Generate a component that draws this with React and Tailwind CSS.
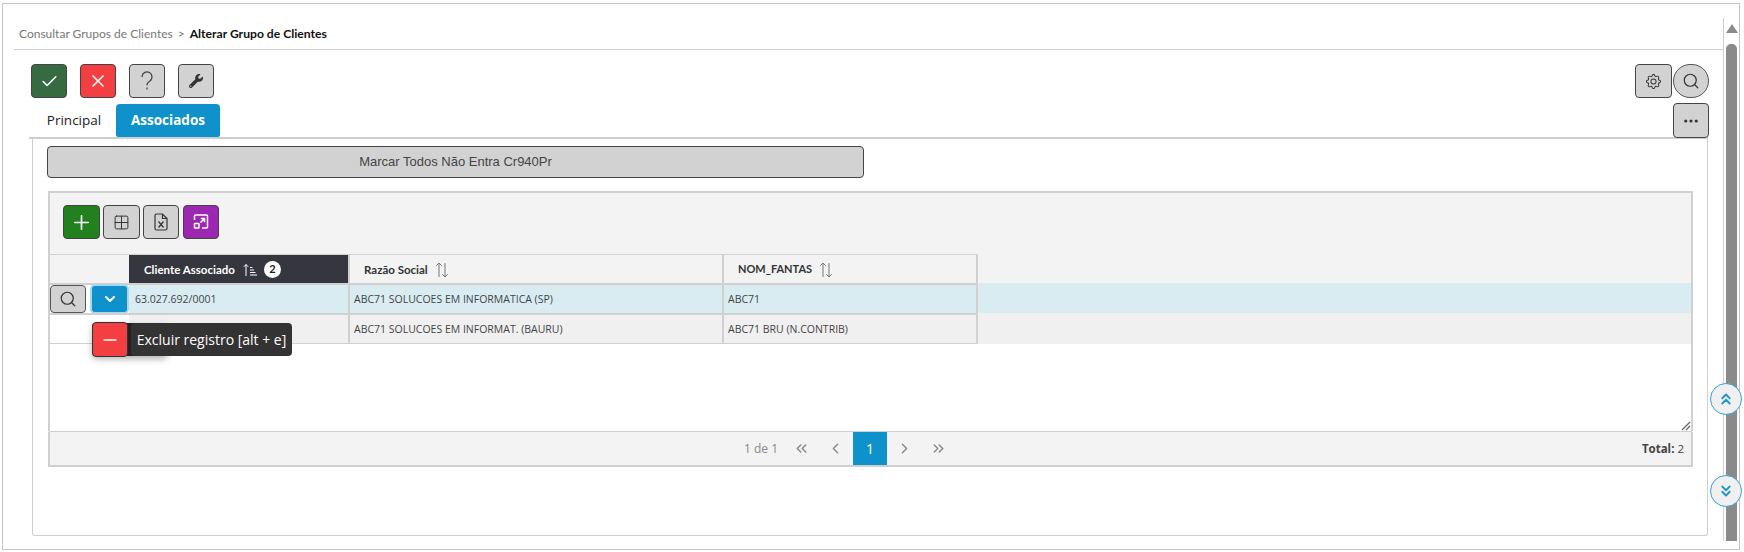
import { Check, X, Minus, Plus, Search, Grid2x2, ChevronDown, ChevronsUp, ChevronsDown, ChevronsLeft, ChevronsRight, ChevronLeft, ChevronRight, Ellipsis } from 'lucide-react';
import { FaWrench } from 'react-icons/fa';
import { BsGear } from 'react-icons/bs';

const latin = 'font-["Lato","Liberation_Sans",sans-serif]';
const segoe = 'font-["Open_Sans","Noto_Sans",sans-serif]';

const ToolButton = ({ className = '', children }) => (
  <button className={`flex h-[34px] items-center justify-center rounded-[4px] border border-[#444] ${className}`}>
    {children}
  </button>
);

const SortIcon = () => (
  <svg width="14" height="16" viewBox="0 0 14 16" fill="none" stroke="#777" strokeWidth="1" className="ml-[7px]">
    <path d="M4 15V1M1.2 3.8L4 1L6.8 3.8" />
    <path d="M10 1V15M7.2 12.2L10 15L12.8 12.2" />
  </svg>
);

const SortedIcon = () => (
  <svg width="15" height="14" viewBox="0 0 15 14" fill="none" stroke="#fff" strokeWidth="1" className="ml-[8px]">
    <path d="M3 13V1.5M0.8 3.8L3 1.5L5.2 3.8" />
    <path d="M7 4.5h2.5M7 7h4M7 9.5h5.5M7 12h7" />
  </svg>
);

const Cell = ({ className = '', children }) => (
  <div className={`flex shrink-0 items-center border-[#d0d0d0] text-[10.5px] text-[#444] ${segoe} ${className}`}>{children}</div>
);

const Label = ({ children }) => <span className="pt-[2px]">{children}</span>;

const rows = [
  { id: '63.027.692/0001', razao: 'ABC71 SOLUCOES EM INFORMATICA (SP)', fantasia: 'ABC71', bg: 'bg-[#d8ecf2]', cell: 'h-[30px] border-t-2' },
  { id: '', razao: 'ABC71 SOLUCOES EM INFORMAT. (BAURU)', fantasia: 'ABC71 BRU (N.CONTRIB)', bg: 'bg-[#f0f0f0]', cell: 'h-[31px] border-y-2 border-b-[1px]' },
];

export default function App() {
  return (
    <div className="relative h-[552px] w-[1744px] overflow-hidden bg-white">
      <div className="ml-[2px] mt-[3px] flex h-[547px] w-[1738px] border border-[#c4c4c4]">
        <div className="flex min-w-0 flex-1 flex-col pl-[11px]">
          {/* breadcrumb */}
          <div className={`flex h-[46px] items-end border-b border-[#cfcfcf] pb-[6px] pl-[5px] text-[12px] ${latin}`}>
            <span className="text-[#777]">Consultar Grupos de Clientes</span>
            <span className="mx-[5px] text-[#777]">&gt;</span>
            <span className="text-[12.15px] font-bold text-[#111]">Alterar Grupo de Clientes</span>
          </div>

          {/* toolbar */}
          <div className="mt-[14px] flex pl-[17px] pr-[14px]">
            <div className="flex gap-[13px]">
              <ToolButton className="w-[36px] bg-[#366a41]"><Check size={19} color="#fff" strokeWidth={2} /></ToolButton>
              <ToolButton className="w-[36px] bg-[#f43f42]"><X size={20} color="#fff" strokeWidth={2} /></ToolButton>
              <ToolButton className="w-[36px] bg-[#d2d2d2]">
                <svg width="14" height="20" viewBox="0 0 14 20" fill="none" stroke="#444" strokeWidth="1.3">
                  <path d="M2 6a5 5 0 1 1 7.6 4.2C8 11.2 7 12 7 14.2" />
                  <path d="M7 16.5V18.5" />
                </svg>
              </ToolButton>
              <ToolButton className="w-[36px] bg-[#d2d2d2]"><FaWrench size={14} color="#333" /></ToolButton>
            </div>
            <div className="ml-auto flex">
              <ToolButton className="w-[37px] bg-[#d2d2d2]"><BsGear size={15} color="#333" /></ToolButton>
              <button className="ml-[1px] flex h-[34px] w-[36px] items-center justify-center rounded-full border border-[#555] bg-[#d2d2d2]">
                <Search size={18} color="#333" strokeWidth={1.6} />
              </button>
            </div>
          </div>

          {/* tabs */}
          <div className="ml-[15px] mr-[15px] mt-[6px] flex h-[35px] border-b-2 border-[#cfcfcf]">
            <div className={`flex h-[33px] w-[87px] items-center justify-center pl-[3px] text-[13.5px] text-[#222] ${segoe}`}>Principal</div>
            <div className={`flex h-[33px] w-[104px] items-center justify-center rounded-t-[4px] rounded-b-[2px] bg-[#0f92cc] text-[13.5px] font-bold text-white ${segoe}`}>Associados</div>
            <ToolButton className="-mr-[1px] -mt-[1px] ml-auto h-[35px] w-[36px] shrink-0 bg-[#d2d2d2]"><Ellipsis size={18} color="#333" strokeWidth={2.2} /></ToolButton>
          </div>

          {/* panel */}
          <div className="ml-[18px] mr-[15px] flex h-[397px] flex-col rounded-b-[3px] border-x border-b border-[#cfcfcf] pl-[14px] pr-[14px] pt-[7px]">
            <button className="h-[32px] w-[817px] shrink-0 rounded-[4px] border border-[#444] bg-[#d2d2d2] font-['Liberation_Sans',sans-serif] text-[13px] text-[#444]">
              Marcar Todos Não Entra Cr940Pr
            </button>

            {/* grid */}
            <div className="relative ml-[1px] mt-[13px] flex h-[240px] shrink-0 flex-col border-x-2 border-t-2 border-[#d0d0d0]">
              <div className="flex h-[61px] shrink-0 items-start gap-[3px] bg-[#f3f3f3] pl-[13px] pt-[12px]">
                <ToolButton className="w-[37px] bg-[#23801f]"><Plus size={23} color="#fff" strokeWidth={1.7} /></ToolButton>
                <ToolButton className="w-[37px] bg-[#d2d2d2]"><Grid2x2 size={17} color="#333" strokeWidth={1.4} /></ToolButton>
                <ToolButton className="w-[36px] bg-[#d2d2d2]">
                  <svg width="14" height="18" viewBox="0 0 14 18" fill="none" stroke="#333" strokeWidth="1.2">
                    <path d="M2.5 1h6l4.5 4.5V15.5a1.5 1.5 0 0 1-1.5 1.5h-9A1.5 1.5 0 0 1 1 15.5v-13A1.5 1.5 0 0 1 2.5 1z" />
                    <path d="M8.5 1v4.5H13" />
                    <path d="M4.5 8.5l5 6M9.5 8.5l-5 6" />
                  </svg>
                </ToolButton>
                <ToolButton className="ml-[1px] w-[36px] bg-[#9c27b0]">
                  <svg width="18" height="18" viewBox="0 0 18 18" fill="none" stroke="#fff" strokeWidth="1.5">
                    <path d="M2.5 7V3A1 1 0 0 1 3.5 2h11a1 1 0 0 1 1 1v11a1 1 0 0 1-1 1H10" />
                    <rect x="2.5" y="10.5" width="4.5" height="4.5" rx="0.5" />
                    <path d="M8.5 9.5L12.2 5.8M8.8 5.5h3.7v3.7" />
                  </svg>
                </ToolButton>
              </div>

              {/* header */}
              <div className="flex h-[29px] shrink-0 bg-[#f3f3f3]">
                <div className="w-[79px] shrink-0 border-t border-[#d0d0d0]" />
                <div className={`flex w-[219px] shrink-0 items-center border-t border-[#d0d0d0] bg-[#36363e] pl-[15px] pt-[1px] text-[11.5px] font-bold text-white ${latin}`}>
                  Cliente Associado
                  <SortedIcon />
                  <span className="ml-[6px] flex h-[17px] w-[17px] items-center justify-center rounded-full bg-white text-[11px] text-[#222]">2</span>
                </div>
                <div className={`flex w-[374px] shrink-0 items-center border-l-2 border-t border-[#d0d0d0] pl-[14px] pt-[1px] text-[11.5px] font-bold text-[#333] ${latin}`}>
                  Razão Social
                  <SortIcon />
                </div>
                <div className={`flex w-[256px] shrink-0 items-center border-x-2 border-t border-[#d0d0d0] pl-[14px] pt-[1px] text-[11px] font-bold text-[#333] ${latin}`}>
                  NOM_FANTAS
                  <SortIcon />
                </div>
              </div>

              {/* rows */}
              {rows.map((row, i) => (
                <div key={i} className={`flex shrink-0 ${row.bg}`}>
                  <Cell className={`w-[79px] gap-[6px] bg-white ${row.cell}`}>
                    {i === 0 && (
                      <>
                        <button className="flex h-[28px] w-[36px] items-center justify-center rounded-[4px] border border-[#555] bg-[#d2d2d2]">
                          <Search size={18} color="#333" strokeWidth={1.6} />
                        </button>
                        <button className="flex h-[26px] w-[35px] items-center justify-center rounded-[3px] bg-[#0f92cc] ring-2 ring-[#a8d8f0]">
                          <ChevronDown size={16} color="#fff" strokeWidth={3} />
                        </button>
                      </>
                    )}
                  </Cell>
                  <Cell className={`w-[219px] pl-[6px] ${row.cell}`}><Label>{row.id}</Label></Cell>
                  <Cell className={`w-[374px] border-l-2 pl-[4px] ${row.cell}`}><Label>{row.razao}</Label></Cell>
                  <Cell className={`w-[256px] border-l-2 border-r-2 pl-[4px] ${row.cell}`}><Label>{row.fantasia}</Label></Cell>
                </div>
              ))}

              {/* resize handle */}
              <svg width="10" height="10" viewBox="0 0 10 10" stroke="#666" strokeWidth="1.2" className="absolute bottom-[0px] right-[0px]">
                <path d="M1 9L9 1M5 9L9 5" />
              </svg>

              {/* row action popup */}
              <div className="absolute left-[42px] top-[130px] h-[33px] w-[75px] rounded-[4px] bg-[#222] shadow-[0_3px_6px_rgba(0,0,0,0.3)]" />
              <button className="absolute left-[42px] top-[129px] flex h-[35px] w-[36px] items-center justify-center rounded-[4px] border border-[#333] bg-[#f43f42]">
                <Minus size={20} color="#fff" strokeWidth={2} />
              </button>
              <div className={`absolute left-[81px] top-[130px] flex h-[33px] w-[161px] items-center justify-center rounded-[4px] bg-[#333] text-[14px] text-white ${segoe}`}>
                Excluir registro [alt + e]
              </div>
            </div>

            {/* pagination */}
            <div className={`ml-[1px] grid h-[36px] shrink-0 grid-cols-[1fr_auto_1fr] items-center rounded-t-[2px] border-x-2 border-b-2 border-t border-[#cfcfcf] bg-[#f3f3f3] text-[12px] text-[#888] ${segoe}`}>
              <div />
              <div className="flex items-center pr-[50px]">
                <span className="mr-[15px]">1 de 1</span>
                <ChevronsLeft size={17} color="#888" />
                <ChevronLeft size={17} color="#888" className="ml-[17px]" />
                <span className="mx-[9px] flex h-[33px] w-[34px] items-center justify-center bg-[#0f92cc] text-[14px] text-white">1</span>
                <ChevronRight size={17} color="#888" />
                <ChevronsRight size={17} color="#888" className="ml-[17px]" />
              </div>
              <div className="justify-self-end pr-[7px] text-[11.5px] text-[#444]"><b>Total:</b> 2</div>
            </div>
          </div>
        </div>

        {/* scrollbar */}
        <div className="mt-[14px] flex h-[523px] w-[16px] shrink-0 flex-col items-center border-l border-[#cfcfcf]">
          <div className="mt-[6px] h-0 w-0 border-x-[6px] border-b-[9px] border-x-transparent border-b-[#8a8a8a]" />
          <div className="mt-[11px] w-[11px] flex-1 rounded-t-[5px] bg-[#8a8a8a]" />
        </div>
      </div>

      {/* scroll jump buttons */}
      <button className="absolute left-[1710px] top-[383px] flex h-[32px] w-[32px] items-center justify-center rounded-full border border-[#37a3d6] bg-[#f0f0f0]">
        <ChevronsUp size={18} color="#1e96d0" strokeWidth={2.4} />
      </button>
      <button className="absolute left-[1710px] top-[475px] flex h-[32px] w-[32px] items-center justify-center rounded-full border border-[#37a3d6] bg-[#f0f0f0]">
        <ChevronsDown size={18} color="#1e96d0" strokeWidth={2.4} />
      </button>
    </div>
  );
}
